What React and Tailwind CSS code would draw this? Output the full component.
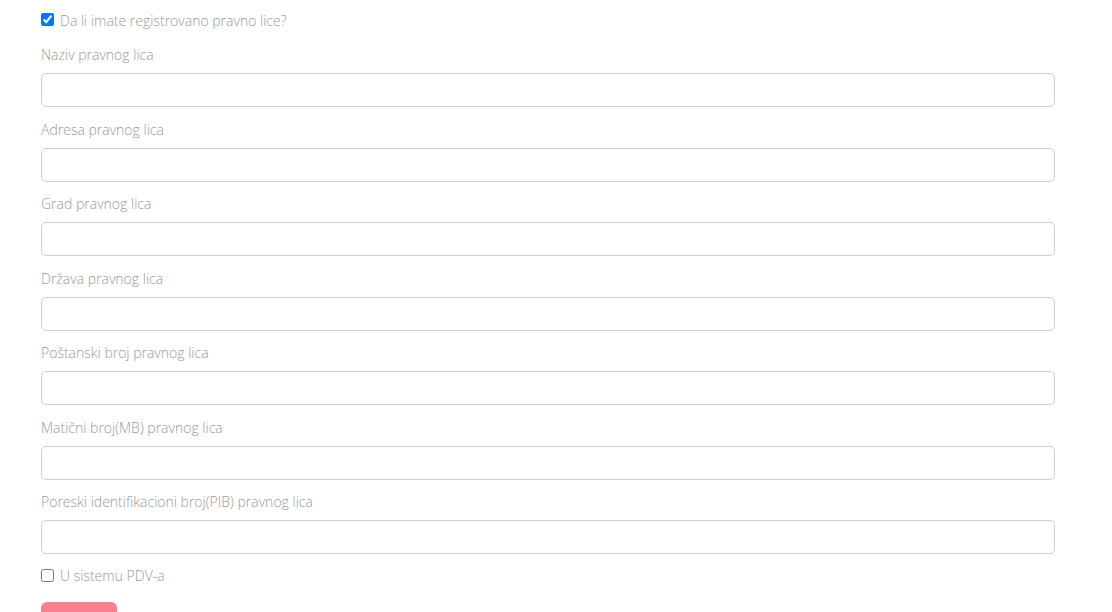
import React from 'react';

const fields = [
    'Naziv pravnog lica',
    'Adresa pravnog lica',
    'Grad pravnog lica',
    'Država pravnog lica',
    'Poštanski broj pravnog lica',
    'Matični broj(MB) pravnog lica',
    'Poreski identifikacioni broj(PIB) pravnog lica',
];

const App = () => {
    return (
        <div
            className="min-h-screen bg-white px-[41px] pt-[13px] text-[14px] font-light text-[#9a9a9a]"
            style={{ fontFamily: '"Open Sans", "Liberation Sans", sans-serif' }}
        >
            {/* Legal entity toggle */}
            <label className="flex items-center h-[13px] mb-[19px]">
                <input type="checkbox" defaultChecked className="w-[13px] h-[13px] m-0 accent-[#0075ff]" />
                <span className="ml-[6px] leading-[20px] mt-[2px]">Da li imate registrovano pravno lice?</span>
            </label>

            {/* Fields */}
            <div className="w-[1014px]">
                {fields.map((label) => (
                    <div key={label} className="mb-[12.5px]">
                        <div className="leading-[20px] h-[20px] mb-[8px]">{label}</div>
                        <input
                            type="text"
                            className="block w-full h-[34px] rounded-[5px] border border-[#cfcfcf] bg-white outline-none"
                        />
                    </div>
                ))}
            </div>

            {/* VAT system */}
            <label className="flex items-center h-[13px] mt-[14.5px]">
                <input type="checkbox" className="w-[13px] h-[13px] m-0" />
                <span className="ml-[6px] leading-[20px] mt-[2px]">U sistemu PDV-a</span>
            </label>

            <button className="mt-[20px] w-[76px] h-[36px] rounded-[6px] bg-[#f8808e] text-white text-sm">
                Sačuvaj
            </button>
        </div>
    );
};

export default App;
